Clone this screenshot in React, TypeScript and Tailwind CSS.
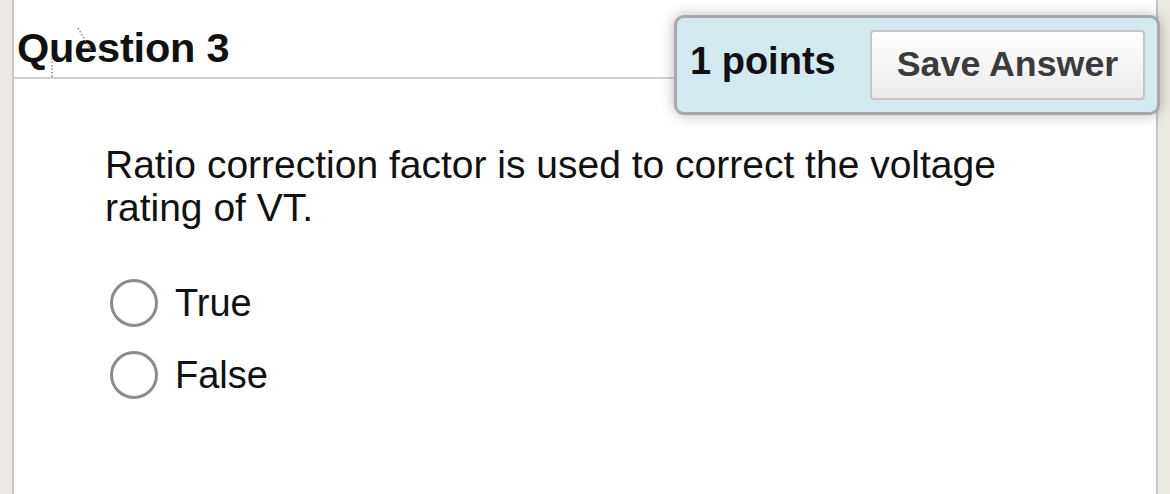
import React from 'react';

const FONT = { fontFamily: '"Liberation Sans", Arial, Helvetica, sans-serif' };

export default function App() {
  return (
    <div className="flex h-[494px] w-[1170px] overflow-hidden bg-[#ece9e2]" style={FONT}>
      <div className="w-[12px] shrink-0" />

      {/* Question panel */}
      <div className="relative w-[1146px] shrink-0 border-x-2 border-[#c6c6c6] bg-white">
        {/* Header */}
        <div className="mr-[480px] border-b-2 border-[#cfcfcf] pl-[3px] pt-[27px] pb-[9px]">
          <h2 className="text-[41.5px] font-bold leading-[41px] tracking-[-0.2px] text-[#111]">Question 3</h2>
        </div>

        {/* cursor artifact */}
        <svg className="pointer-events-none absolute left-[30px] top-[26px]" width="60" height="56" viewBox="0 0 60 56">
          <path d="M8 32 L8 52" stroke="#8a8a8a" strokeWidth="1.5" strokeDasharray="1.5 2" fill="none" />
          <path d="M34 2 L48 26" stroke="#8a8a8a" strokeWidth="1.5" strokeDasharray="1.5 2" fill="none" />
        </svg>

        {/* Points / save callout */}
        <div className="absolute left-[660px] top-[15px] flex h-[100px] w-[486px] items-center justify-between rounded-[10px] border-[3px] border-[#a6a8a9] bg-[#d2e9ef] pl-[13px] pr-[12px] shadow-[0_0_14px_rgba(0,0,0,0.28)]">
          <span className="mb-[8px] text-[38px] font-bold leading-none text-[#111]">1 points</span>
          <button className="h-[70px] w-[275px] rounded-[4px] border-2 border-[#c4c4c4] bg-gradient-to-b from-white to-[#ebebeb] text-[35.8px] font-bold text-[#3b3b3b]">
            Save Answer
          </button>
        </div>

        {/* Body */}
        <div className="pl-[91px] pr-[60px] pt-[64px]">
          <p className="text-[39px] leading-[43px] text-[#111]">
            Ratio correction factor is used to correct the voltage<br />rating of VT.
          </p>

          <div className="mt-[50px] flex flex-col gap-[24px] pl-[5px]">
            <Option label="True" />
            <Option label="False" />
          </div>
        </div>
      </div>

      <div className="flex-1" />
    </div>
  );
}

function Option({ label }: { label: string }) {
  return (
    <label className="flex items-center gap-[17px]">
      <span className="h-[48px] w-[48px] shrink-0 rounded-full border-[3.5px] border-[#8c8c90] bg-white" />
      <span className="text-[38px] leading-[48px] text-[#111]">{label}</span>
    </label>
  );
}
